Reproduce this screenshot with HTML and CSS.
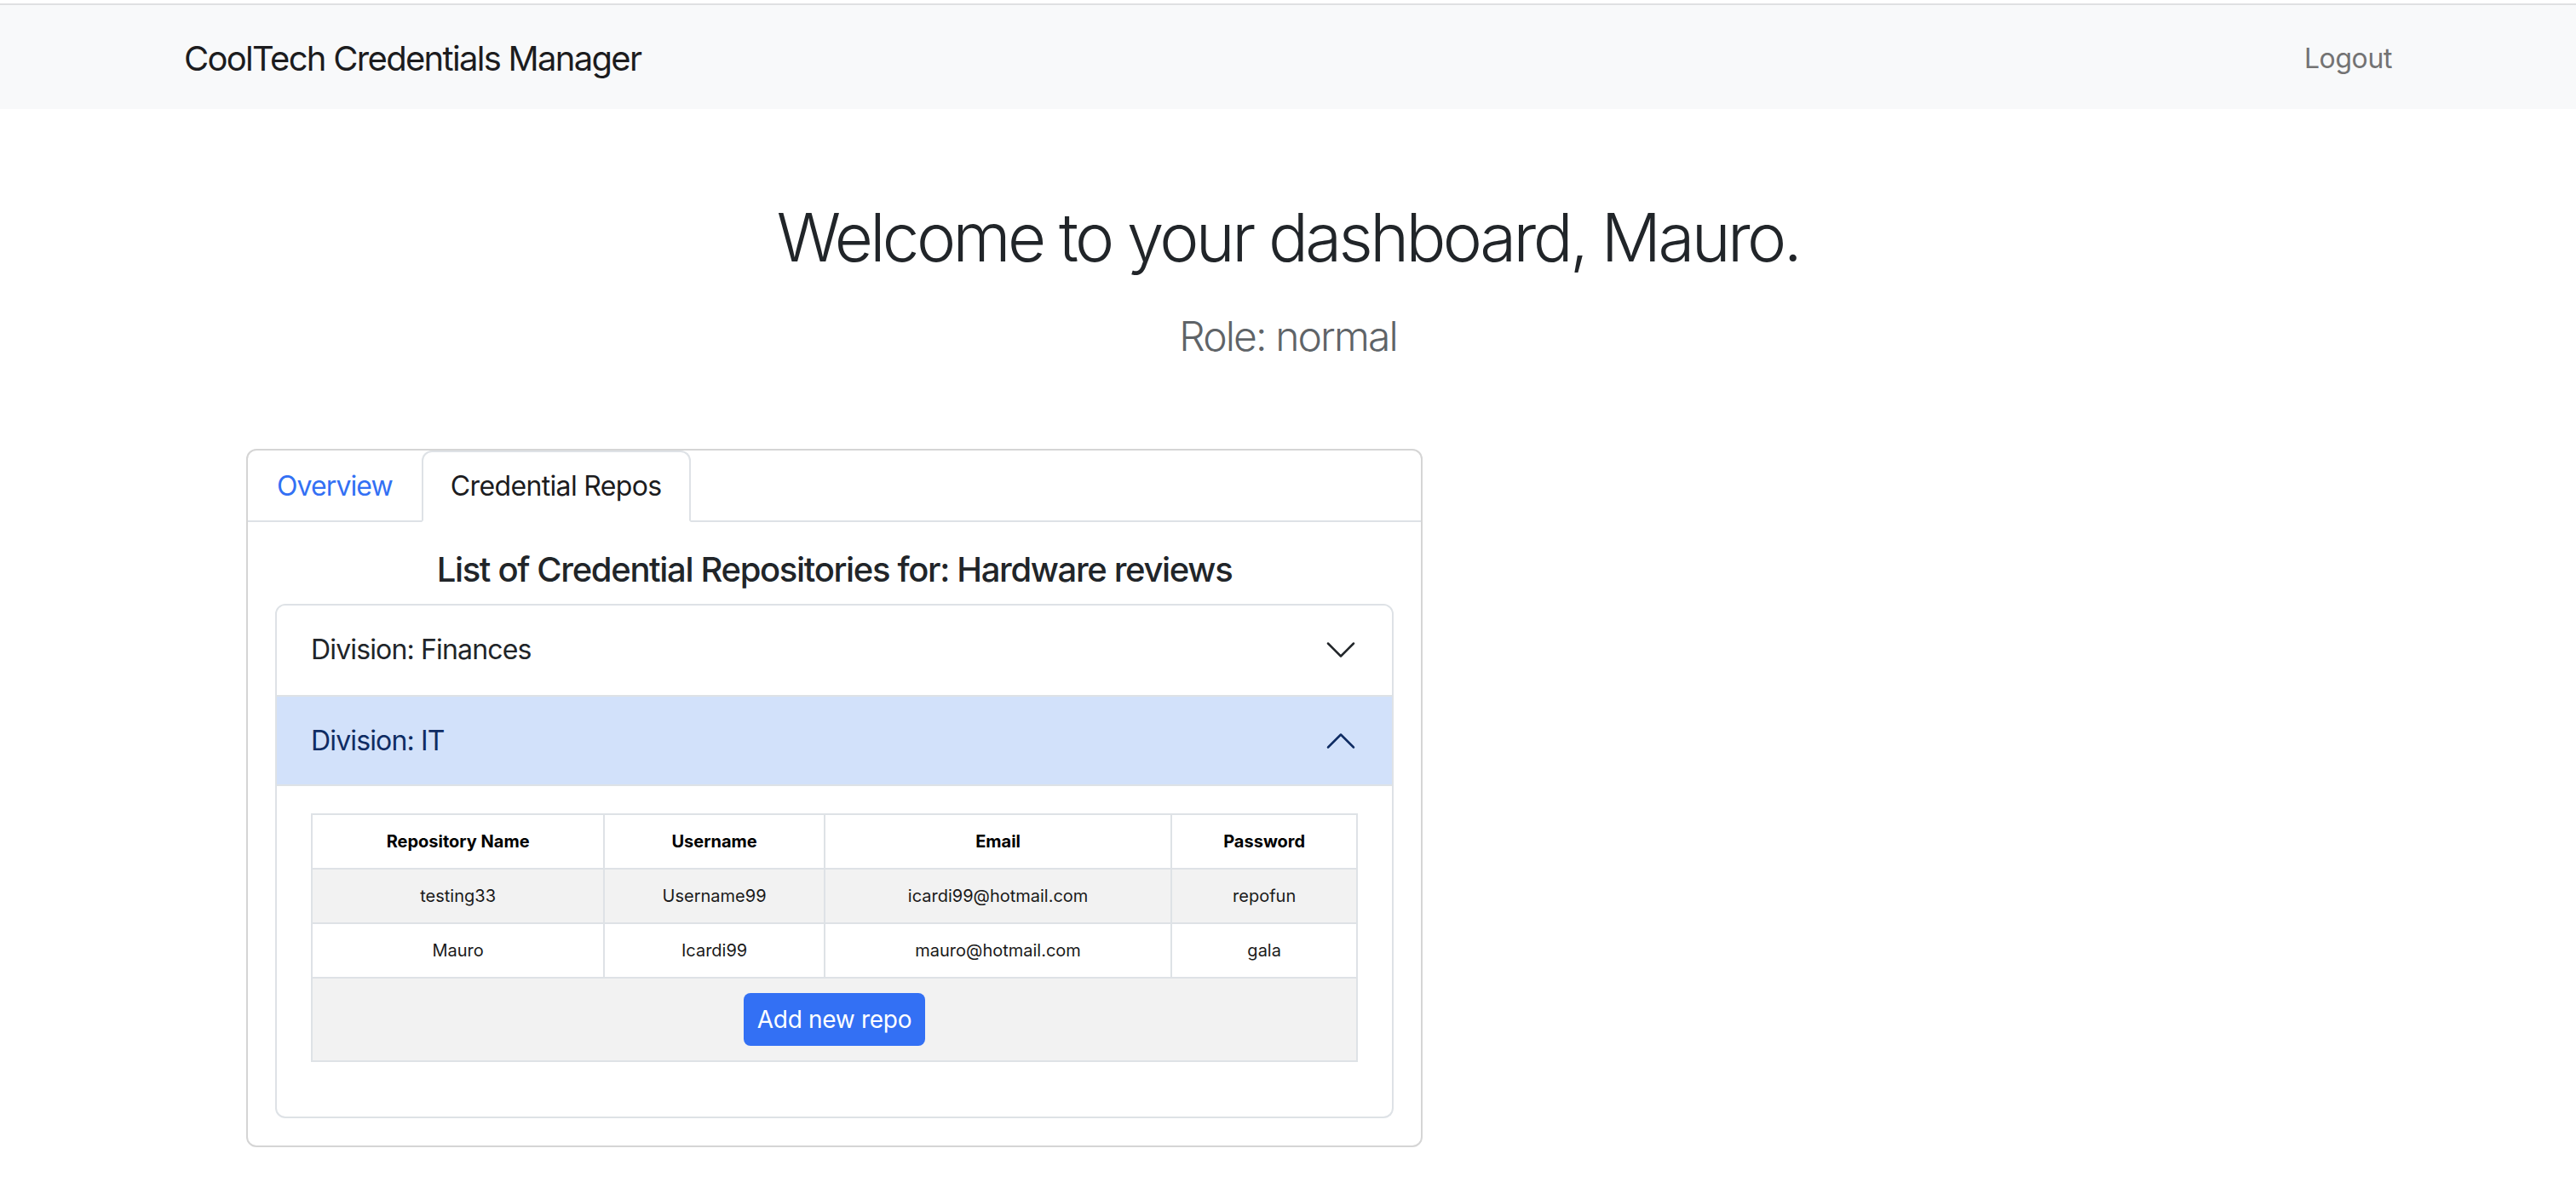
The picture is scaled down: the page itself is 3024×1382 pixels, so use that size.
FILE: index.html
```html
<!DOCTYPE html>
<html lang="en">
<head>
<meta charset="utf-8">
<title>CoolTech Credentials Manager</title>
<link rel="stylesheet" href="styles.css">
</head>
<body>
<nav class="navbar">
  <div class="container nav-inner">
    <a class="brand" href="#">CoolTech Credentials Manager</a>
    <a class="nav-link" href="#">Logout</a>
  </div>
</nav>
<main class="container">
  <h1 class="welcome">Welcome to your dashboard, Mauro.</h1>
  <h4 class="role">Role: normal</h4>
  <div class="card">
    <ul class="tabs">
      <li><a class="tab" href="#">Overview</a></li>
      <li><a class="tab active" href="#">Credential Repos</a></li>
    </ul>
    <div class="card-body">
      <h5 class="list-title">List of Credential Repositories for: Hardware reviews</h5>
      <div class="accordion">
        <div class="acc-item">
          <button class="acc-btn">
            <span>Division: Finances</span>
            <svg class="chev" viewBox="0 0 16 16" fill="none" stroke="#212529" stroke-linecap="round" stroke-linejoin="round"><path d="M2 5L8 11L14 5"/></svg>
          </button>
        </div>
        <div class="acc-item">
          <button class="acc-btn open">
            <span>Division: IT</span>
            <svg class="chev" viewBox="0 0 16 16" fill="none" stroke="#0f2c63" stroke-linecap="round" stroke-linejoin="round"><path d="M2 11L8 5L14 11"/></svg>
          </button>
          <div class="acc-body">
            <table class="repo-table">
              <thead>
                <tr>
                  <th class="col-name">Repository Name</th>
                  <th class="col-user">Username</th>
                  <th class="col-email">Email</th>
                  <th class="col-pass">Password</th>
                </tr>
              </thead>
              <tbody>
                <tr class="striped">
                  <td>testing33</td>
                  <td>Username99</td>
                  <td>icardi99@hotmail.com</td>
                  <td>repofun</td>
                </tr>
                <tr>
                  <td>Mauro</td>
                  <td>Icardi99</td>
                  <td>mauro@hotmail.com</td>
                  <td>gala</td>
                </tr>
                <tr class="striped foot">
                  <td colspan="4"><button class="btn">Add new repo</button></td>
                </tr>
              </tbody>
            </table>
          </div>
        </div>
      </div>
    </div>
  </div>
</main>
</body>
</html>
```

FILE: styles.css
```css
* { box-sizing: border-box; }

html, body {
  margin: 0;
  padding: 0;
  background: #ffffff;
}

body {
  font-family: "Inter", "Noto Sans", "Liberation Sans", sans-serif;
  color: #212529;
}

.container {
  width: 2640px;
  margin: 0 auto;
  padding: 0 24px;
}

.navbar {
  margin-top: 4px;
  border-top: 2px solid #dfe0e2;
  background: #f8f9fa;
  height: 124px;
  padding-top: 3px;
  display: flex;
  align-items: center;
}

.nav-inner {
  display: flex;
  align-items: center;
  justify-content: space-between;
}

.brand {
  font-size: 40px;
  line-height: 60px;
  color: #1c1c1e;
  text-decoration: none;
  letter-spacing: -1.7px;
}

.nav-link {
  font-size: 32px;
  line-height: 48px;
  color: #737373;
  text-decoration: none;
  letter-spacing: -0.4px;
}

.welcome {
  margin: 104px 0 0;
  font-size: 78px;
  line-height: 94px;
  font-weight: 300;
  text-align: center;
  color: #212529;
  letter-spacing: -3.6px;
}

.role {
  margin: 40px 0 0;
  font-size: 48px;
  line-height: 58px;
  font-weight: 300;
  text-align: center;
  color: #5f6468;
  letter-spacing: -1.9px;
}

.card {
  margin: 103px 0 0 73px;
  width: 1381px;
  border: 2px solid #d5d5d5;
  border-radius: 12px;
  background: #fff;
}

.tabs {
  display: flex;
  list-style: none;
  margin: 0;
  padding: 0;
  border-bottom: 2px solid #dee2e6;
}

.tab {
  display: block;
  padding: 16px 32px;
  font-size: 32px;
  line-height: 48px;
  border: 2px solid transparent;
  border-top-left-radius: 12px;
  border-top-right-radius: 12px;
  margin-bottom: -2px;
  color: #3370f4;
  text-decoration: none;
  letter-spacing: -0.9px;
}

.tab.active {
  color: #1c1c1e;
  background: #fff;
  border-color: #dee2e6 #dee2e6 #fff;
  letter-spacing: -0.65px;
}

.card-body {
  padding: 32px;
}

.list-title {
  margin: 0 0 16px;
  font-size: 40px;
  line-height: 48px;
  font-weight: 500;
  text-align: center;
  color: #212529;
  letter-spacing: -1.35px;
}

.acc-item {
  border: 2px solid #dee2e6;
  background: #fff;
}

.acc-item:first-child {
  border-radius: 12px 12px 0 0;
}

.acc-item + .acc-item {
  border-top: 0;
}

.acc-item:last-child {
  border-radius: 0 0 12px 12px;
}

.acc-btn {
  display: flex;
  align-items: center;
  width: 100%;
  padding: 28px 40px 29px;
  font-family: inherit;
  font-size: 32px;
  line-height: 48px;
  background: #fff;
  border: 0;
  text-align: left;
  color: #212529;
  letter-spacing: -0.85px;
  border-radius: 10px 10px 0 0;
}

.acc-btn.open {
  background: #d2e1fa;
  color: #0f2c63;
  border-radius: 0;
  box-shadow: inset 0 -2px 0 #dee2e6;
}

.chev {
  width: 40px;
  height: 40px;
  margin-left: auto;
  flex: none;
}

.acc-body {
  padding: 32px 40px;
}

.repo-table {
  width: 100%;
  border-collapse: collapse;
  margin-bottom: 32px;
  font-size: 20px;
  line-height: 30px;
}

.repo-table th,
.repo-table td {
  border: 2px solid #dee2e6;
  padding: 16px;
  text-align: center;
  color: #1a1a1a;
  font-weight: 400;
}

.repo-table th {
  font-weight: 700;
  color: #000;
}

.col-name { width: 344px; }
.col-user { width: 259px; }
.col-email { width: 408px; }
.col-pass { width: 218px; }

.repo-table tr.striped td {
  background: #f2f2f2;
}

.repo-table tr.foot td {
  padding: 17px 16px;
}

.btn {
  display: inline-block;
  background: #3370f4;
  color: #fff;
  border: 0;
  border-radius: 8px;
  font-family: inherit;
  font-size: 28px;
  line-height: 42px;
  padding: 10px 16px;
  letter-spacing: -0.3px;
}
```
